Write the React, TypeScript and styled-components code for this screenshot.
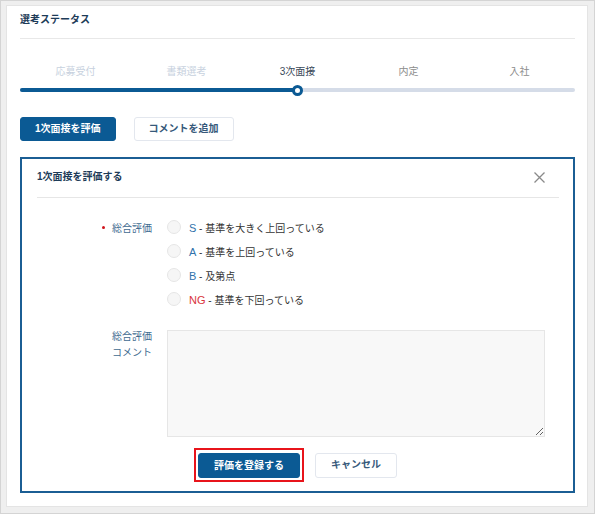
import React, { FC } from 'react';
import styled, { createGlobalStyle } from 'styled-components';

const GlobalStyle = createGlobalStyle`
    html, body {
        margin: 0;
        padding: 0;
        background: #efefef;
    }
    * {
        box-sizing: border-box;
    }
    body {
        font-family: 'Liberation Sans', 'Noto Sans CJK JP', sans-serif;
        font-size: 10px;
        color: #333;
    }
`;

const Frame = styled.div`
    width: 595px;
    height: 514px;
    border: 1px solid #d4d4d4;
    background: #efefef;
    padding: 4px 6px 6px 5px;
`;

const Card = styled.div`
    height: 100%;
    background: #fff;
    border: 1px solid #e4e4e4;
    padding: 0 12px 0 13px;
`;

const SectionTitle = styled.div`
    padding: 6px 0 10px;
    line-height: 16px;
    font-weight: bold;
    color: #1d3b58;
    border-bottom: 1px solid #e8e8e8;
`;

const Stepper = styled.div`
    margin-top: 25px;
`;

const StepLabels = styled.div`
    display: grid;
    grid-template-columns: repeat(5, 1fr);
    line-height: 16px;
`;

const StepLabel = styled.div<{ $state: 'done' | 'current' | 'todo' }>`
    text-align: center;
    color: ${(p) => (p.$state === 'done' ? '#c7d1de' : p.$state === 'current' ? '#3b4a5a' : '#8c8c8c')};
`;

const Track = styled.div`
    position: relative;
    margin-top: 8px;
    height: 4px;
    border-radius: 2px;
    background: #d5dce8;
`;

const Fill = styled.div<{ $pct: number }>`
    width: ${(p) => p.$pct}%;
    height: 100%;
    border-radius: 2px;
    background: #0b5a94;
`;

const Dot = styled.div<{ $pct: number }>`
    position: absolute;
    top: 50%;
    left: ${(p) => p.$pct}%;
    width: 11px;
    height: 11px;
    margin: -5.5px 0 0 -5.5px;
    border-radius: 50%;
    background: #fff;
    border: 3px solid #0b5a94;
`;

const ActionRow = styled.div`
    display: flex;
    gap: 18px;
    margin-top: 25px;
`;

const Button = styled.button<{ $primary?: boolean }>`
    height: 24px;
    padding: 0 14px;
    font: inherit;
    font-weight: bold;
    line-height: 22px;
    border-radius: 3px;
    cursor: pointer;
    border: 1px solid ${(p) => (p.$primary ? '#0b5a94' : '#e3e7ee')};
    background: ${(p) => (p.$primary ? '#0b5a94' : '#fff')};
    color: ${(p) => (p.$primary ? '#fff' : '#36597a')};
`;

const Panel = styled.div`
    margin-top: 16px;
    border: 2px solid #1b5e94;
    padding: 0 14px 9px 15px;
`;

const PanelHeader = styled.div`
    display: flex;
    justify-content: space-between;
    align-items: center;
    padding: 10px 0 12px;
    line-height: 16px;
    border-bottom: 1px solid #e6e6e6;
`;

const PanelTitle = styled.div`
    font-weight: bold;
    color: #1d3b58;
`;

const CloseButton = styled.button`
    display: flex;
    padding: 0;
    margin-right: 14px;
    border: none;
    background: none;
    cursor: pointer;
`;

const Form = styled.div`
    display: grid;
    grid-template-columns: 115px 1fr;
    column-gap: 15px;
    row-gap: 19px;
    margin-top: 17px;
`;

const FieldLabel = styled.div`
    display: flex;
    justify-content: flex-end;
    align-items: center;
    height: 24px;
    color: #3f6b90;
`;

const MultiLineLabel = styled.div`
    text-align: right;
    line-height: 16px;
    margin-top: -1px;
    color: #3f6b90;
`;

const Required = styled.span`
    width: 3px;
    height: 3px;
    margin-right: 7px;
    border-radius: 50%;
    background: #d0141b;
`;

const RadioList = styled.div`
    display: flex;
    flex-direction: column;
`;

const RadioRow = styled.label`
    display: flex;
    align-items: center;
    gap: 8px;
    height: 24px;
    cursor: pointer;
`;

const RadioCircle = styled.span`
    width: 14px;
    height: 14px;
    border-radius: 50%;
    background: #f6f6f6;
    border: 1px solid #e6e6e6;
`;

const Grade = styled.span<{ $ng?: boolean }>`
    font-size: 11px;
    color: ${(p) => (p.$ng ? '#d9343b' : '#2f72ab')};
`;

const RadioText = styled.span`
    color: #333;
`;

const CommentArea = styled.textarea`
    width: 378px;
    height: 107px;
    background: #f8f8f8;
    border: 1px solid #e6e6e6;
    border-radius: 0;
    font: inherit;
    display: block;
`;

const Footer = styled.div`
    display: flex;
    justify-content: center;
    align-items: center;
    gap: 11px;
    margin-top: 11px;
    padding-right: 5px;
`;

const Highlight = styled.div`
    border: 2px solid #e8141b;
    padding: 3px 2px 2px;
`;

const FooterButton = styled(Button)`
    height: 25px;
    padding: 0 15px;
`;

const steps = ['応募受付', '書類選考', '3次面接', '内定', '入社'];
const current = 2;

const grades = [
    { code: 'S', text: '基準を大きく上回っている' },
    { code: 'A', text: '基準を上回っている' },
    { code: 'B', text: '及第点' },
    { code: 'NG', text: '基準を下回っている' },
];

const App: FC = () => {
    const pct = ((current + 0.5) / steps.length) * 100;

    return (
        <>
            <GlobalStyle />
            <Frame>
                <Card>
                    <SectionTitle>選考ステータス</SectionTitle>
                    <Stepper>
                        <StepLabels>
                            {steps.map((s, i) => (
                                <StepLabel
                                    key={s}
                                    $state={i < current ? 'done' : i === current ? 'current' : 'todo'}
                                >
                                    {s}
                                </StepLabel>
                            ))}
                        </StepLabels>
                        <Track>
                            <Fill $pct={pct} />
                            <Dot $pct={pct} />
                        </Track>
                    </Stepper>
                    <ActionRow>
                        <Button $primary>1次面接を評価</Button>
                        <Button>コメントを追加</Button>
                    </ActionRow>
                    <Panel>
                        <PanelHeader>
                            <PanelTitle>1次面接を評価する</PanelTitle>
                            <CloseButton aria-label="閉じる">
                                <svg width="11" height="11" viewBox="0 0 11 11">
                                    <path d="M0.5 0.5 L10.5 10.5 M10.5 0.5 L0.5 10.5" stroke="#8a8a8a" strokeWidth="1.3" />
                                </svg>
                            </CloseButton>
                        </PanelHeader>
                        <Form>
                            <FieldLabel>
                                <Required />
                                総合評価
                            </FieldLabel>
                            <RadioList>
                                {grades.map((g) => (
                                    <RadioRow key={g.code}>
                                        <RadioCircle />
                                        <RadioText>
                                            <Grade $ng={g.code === 'NG'}>{g.code}</Grade> - {g.text}
                                        </RadioText>
                                    </RadioRow>
                                ))}
                            </RadioList>
                            <MultiLineLabel>
                                総合評価
                                <br />
                                コメント
                            </MultiLineLabel>
                            <CommentArea />
                        </Form>
                        <Footer>
                            <Highlight>
                                <FooterButton $primary>評価を登録する</FooterButton>
                            </Highlight>
                            <FooterButton>キャンセル</FooterButton>
                        </Footer>
                    </Panel>
                </Card>
            </Frame>
        </>
    );
};

export default App;
